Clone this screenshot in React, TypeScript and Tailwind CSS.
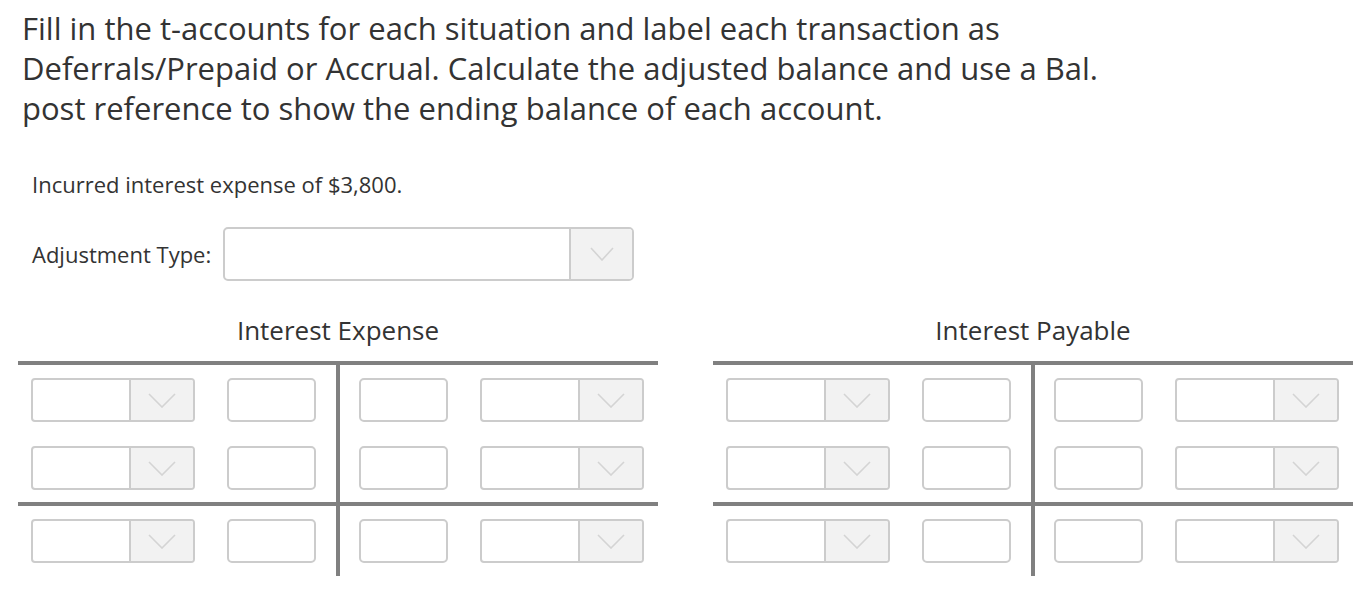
import React from 'react';

const Chevron: React.FC<{ w: number; h: number }> = ({ w, h }) => (
  <svg width={w} height={h} viewBox={`0 0 ${w} ${h}`} fill="none">
    <polyline
      points={`1,1 ${w / 2},${h - 1} ${w - 1},1`}
      stroke="#d4d4d4"
      strokeWidth="1.6"
    />
  </svg>
);

const SmallSelect: React.FC = () => (
  <div className="flex w-[164px] h-[44px] border-2 border-[#cccccc] rounded-[4px] overflow-hidden bg-white">
    <div className="flex-1" />
    <div className="w-[64px] border-l-2 border-[#cccccc] bg-[#f2f2f2] flex items-center justify-center">
      <Chevron w={28} h={15} />
    </div>
  </div>
);

const TextBox: React.FC = () => (
  <div className="w-[89px] h-[44px] border-2 border-[#cccccc] rounded-[5px] bg-white" />
);

const LeftRow: React.FC = () => (
  <div className="flex items-center justify-between pl-[13px] pr-[20px]">
    <SmallSelect />
    <TextBox />
  </div>
);

const RightRow: React.FC = () => (
  <div className="flex items-center justify-between pl-[19px] pr-[14px]">
    <TextBox />
    <SmallSelect />
  </div>
);

const TAccount: React.FC<{ title: string }> = ({ title }) => (
  <div className="w-[640px]">
    <div className="text-center text-[26px] leading-[32px] mb-[15px]">{title}</div>
    <div className="border-t-4 border-[#808080]">
      <div className="flex">
        <div className="flex-1 flex flex-col gap-[24px] pt-[13px] pb-[12px]">
          <LeftRow />
          <LeftRow />
        </div>
        <div className="w-[4px] bg-[#808080]" />
        <div className="flex-1 flex flex-col gap-[24px] pt-[13px] pb-[12px]">
          <RightRow />
          <RightRow />
        </div>
      </div>
      <div className="h-[4px] bg-[#808080]" />
      <div className="flex">
        <div className="flex-1 pt-[13px] pb-[13px]">
          <LeftRow />
        </div>
        <div className="w-[4px] bg-[#808080]" />
        <div className="flex-1 pt-[13px] pb-[13px]">
          <RightRow />
        </div>
      </div>
    </div>
  </div>
);

export default function App() {
  return (
    <div className="w-[1362px] h-[605px] bg-white text-[#333333] font-['Open_Sans',sans-serif] overflow-hidden">
      <h1 className="pl-[22px] pt-[8px] text-[31px] leading-[40px] font-normal">
        Fill in the t-accounts for each situation and label each transaction as
        <br />
        Deferrals/Prepaid or Accrual. Calculate the adjusted balance and use a Bal.
        <br />
        post reference to show the ending balance of each account.
      </h1>

      <p className="pl-[32px] mt-[42px] text-[22px] leading-[28px]">Incurred interest expense of $3,800.</p>

      <div className="flex items-center pl-[32px] mt-[29px] gap-[12px]">
        <span className="text-[22px] leading-[28px]">Adjustment Type:</span>
        <div className="flex w-[411px] h-[54px] border-2 border-[#cccccc] rounded-[5px] overflow-hidden bg-white">
          <div className="flex-1" />
          <div className="w-[63px] border-l-2 border-[#cccccc] bg-[#f2f2f2] flex items-center justify-center">
            <Chevron w={24} h={14} />
          </div>
        </div>
      </div>

      <div className="flex pl-[18px] gap-[55px] mt-[33px]">
        <TAccount title="Interest Expense" />
        <TAccount title="Interest Payable" />
      </div>
    </div>
  );
}
